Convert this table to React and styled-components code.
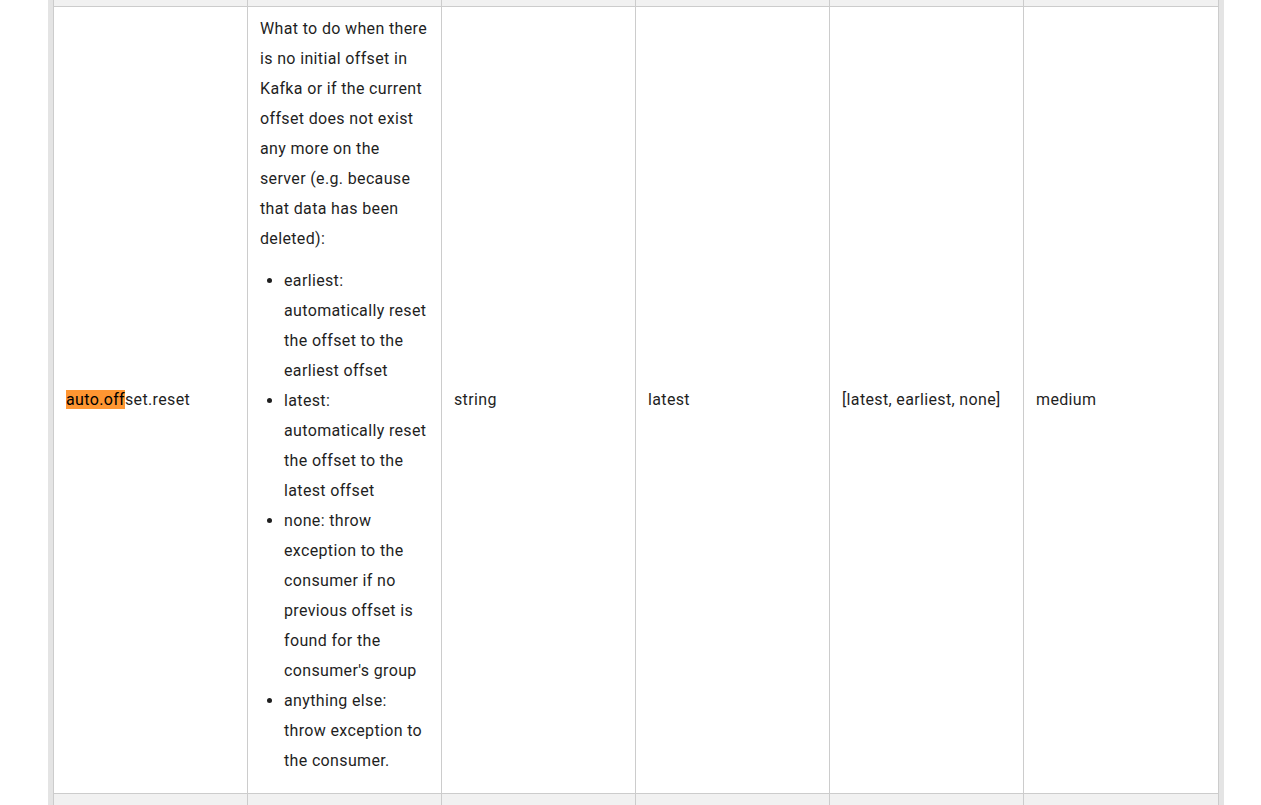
import React from "react";
import styled, { createGlobalStyle } from "styled-components";

const Global = createGlobalStyle`
  html, body { margin: 0; padding: 0; background: #fff; }
  body { font-family: Roboto, "Liberation Sans", sans-serif; font-size: 16px; letter-spacing: 0.35px; color: #1f1f1f; overflow: hidden; }
`;

const Frame = styled.div`
  margin: 0 37px 0 48px;
  padding: 0 6px 0 5px;
  background: #e4e4e4;
  min-height: 900px;
`;

const Table = styled.table`
  width: 1165px;
  border-collapse: collapse;
  table-layout: fixed;
  background: #fff;
`;

const Row = styled.tr`
  background: ${(p) => (p.$shaded ? "#f1f1f1" : "#fff")};
`;

const Cell = styled.td`
  border: 1px solid #ccc;
  border-top: ${(p) => (p.$noTop ? "none" : "1px solid #ccc")};
  padding: ${(p) => (p.$stub ? "0" : "7px 12px 6px")};
  height: ${(p) => (p.$stubHeight ? `${p.$stubHeight}px` : "auto")};
  line-height: 30px;
  vertical-align: middle;
  box-sizing: border-box;
  word-wrap: break-word;
`;

const Para = styled.p`
  margin: 0 0 12px;
`;

const List = styled.ul`
  margin: 0 0 11px;
  padding-left: 24px;
`;

const Mark = styled.span`
  background: #ff9632;
  color: #000;
`;

const cols = Array.from({ length: 6 });

export default function App() {
  return (
    <>
      <Global />
      <Frame>
        <Table>
          <colgroup>
            {cols.map((_, i) => (
              <col key={i} style={{ width: i === 5 ? 195 : 194 }} />
            ))}
          </colgroup>
          <tbody>
            <Row $shaded>
              {cols.map((_, i) => (
                <Cell key={i} $stub $noTop $stubHeight={6} />
              ))}
            </Row>
            <Row>
              <Cell>
                <Mark>auto.off</Mark>set.reset
              </Cell>
              <Cell>
                <Para>
                  What to do when there is no initial offset in Kafka or if the
                  current offset does not exist any more on the server (e.g.
                  because that data has been deleted):
                </Para>
                <List>
                  <li>earliest: automatically reset the offset to the earliest offset</li>
                  <li>latest: automatically reset the offset to the latest offset</li>
                  <li>none: throw exception to the consumer if no previous offset is found for the consumer's group</li>
                  <li>anything else: throw exception to the consumer.</li>
                </List>
              </Cell>
              <Cell>string</Cell>
              <Cell>latest</Cell>
              <Cell>[latest, earliest, none]</Cell>
              <Cell>medium</Cell>
            </Row>
            <Row $shaded>
              {cols.map((_, i) => (
                <Cell key={i} $stub $stubHeight={60} />
              ))}
            </Row>
          </tbody>
        </Table>
      </Frame>
    </>
  );
}
